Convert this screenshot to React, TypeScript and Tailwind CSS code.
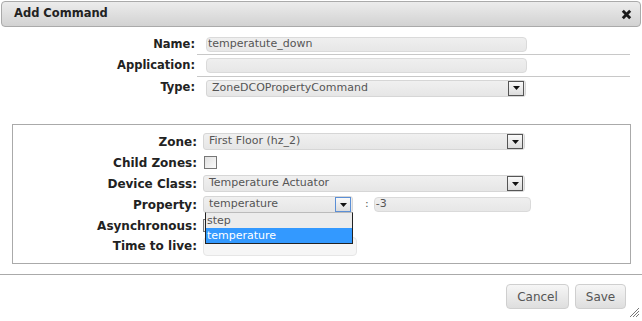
import { useState } from 'react';

const font = { fontFamily: '"DejaVu Sans", Verdana, sans-serif' };

function Arrow({ focused }: { focused?: boolean }) {
  return (
    <span
      className={`flex h-[15px] w-[16px] items-center justify-center border bg-gradient-to-b from-[#fafafa] to-[#dcdcdc] ${
        focused ? 'border-[#5b8fd6]' : 'border-[#555]'
      }`}
    >
      <svg width="7" height="4" viewBox="0 0 7 4">
        <path d="M0 0h7L3.5 4z" fill="#111" />
      </svg>
    </span>
  );
}

function TextBox({ value, w }: { value?: string; w: string }) {
  return (
    <div
      className={`${w} flex h-[15px] items-center rounded-[4px] border border-[#dadada] bg-gradient-to-b from-[#efefef] to-[#e7e7e7] px-[1px] text-[11px] text-[#555]`}
    >
      {value}
    </div>
  );
}

function Select({ value, w, focused }: { value: string; w: string; focused?: boolean }) {
  return (
    <div
      className={`${w} flex h-[17px] items-center justify-between rounded-[3px] border border-[#d6d6d6] bg-gradient-to-b from-[#f0f0f0] to-[#e6e6e6] pl-[5px] pr-[1px] text-[11px] text-[#555]`}
    >
      <span>{value}</span>
      <Arrow focused={focused} />
    </div>
  );
}

function Label({ children, top }: { children: string; top?: boolean }) {
  return (
    <div
      className={`w-[184px] shrink-0 text-right font-bold text-[#222] ${top ? 'text-[11.5px]' : 'text-[12px]'}`}
    >
      {children}
    </div>
  );
}

export default function App() {
  const [open] = useState(true);

  return (
    <div className="relative h-[321px] w-[642px] overflow-hidden bg-white" style={font}>
      {/* Title bar */}
      <div className="mx-[1px] mt-[1px] flex h-[26px] items-center justify-between rounded-[4px] border border-[#aaa] bg-gradient-to-b from-[#ececec] to-[#d2d2d2] pl-[12px] pr-[8px]">
        <span className="text-[11.5px] font-bold text-[#222]">Add Command</span>
        <svg width="11" height="11" viewBox="0 0 11 11">
          <path d="M1.8 1.8l7.4 7.4M9.2 1.8l-7.4 7.4" stroke="#1a1a1a" strokeWidth="2.9" />
        </svg>
      </div>

      {/* Top fields */}
      <div className="mt-[8px] flex flex-col pl-[11px]">
        <div className="flex h-[20px] items-center">
          <Label top>Name:</Label>
          <div className="ml-[2px] flex h-full w-[433px] items-center border-b border-[#c8c8c8] pl-[9px]">
            <TextBox value="temperatute_down" w="w-[321px]" />
          </div>
        </div>
        <div className="flex h-[22px] items-center">
          <Label top>Application:</Label>
          <div className="ml-[2px] flex h-full w-[433px] items-center border-b border-[#c8c8c8] pl-[9px]">
            <TextBox w="w-[321px]" />
          </div>
        </div>
        <div className="flex h-[22px] items-center">
          <Label top>Type:</Label>
          <div className="ml-[2px] flex items-center pl-[9px]">
            <Select value="ZoneDCOPropertyCommand" w="w-[320px]" />
          </div>
        </div>
      </div>

      {/* Zone box */}
      <div className="ml-[12px] mt-[25px] flex h-[140px] w-[619px] flex-col border border-[#aaa] pt-[6px]">
        <div className="flex h-[21px] items-center">
          <Label>Zone:</Label>
          <div className="ml-[6px]">
            <Select value="First Floor (hz_2)" w="w-[322px]" />
          </div>
        </div>
        <div className="flex h-[21px] items-center">
          <Label>Child Zones:</Label>
          <div className="ml-[7px] h-[13px] w-[13px] border border-[#777] bg-gradient-to-br from-[#e0e0e0] to-[#fbfbfb]" />
        </div>
        <div className="flex h-[21px] items-center">
          <Label>Device Class:</Label>
          <div className="ml-[6px]">
            <Select value="Temperature Actuator" w="w-[322px]" />
          </div>
        </div>
        <div className="flex h-[21px] items-center">
          <Label>Property:</Label>
          <div className="relative ml-[6px]">
            <Select value="temperature" w="w-[150px]" focused />
            {open && (
              <div className="absolute left-[2px] top-[16px] z-10 flex w-[148px] flex-col border border-[#222] border-t-[#bbb] bg-white text-[11px]">
                <div className="h-[15px] bg-[#ececec] pl-[1px] leading-[15px] text-[#555]">step</div>
                <div className="h-[15px] bg-[#3399ff] pl-[1px] leading-[15px] text-white">temperature</div>
              </div>
            )}
          </div>
          <span className="ml-[12px] text-[11px] text-[#555]">:</span>
          <div className="ml-[5px]">
            <TextBox value="-3" w="w-[157px]" />
          </div>
        </div>
        <div className="flex h-[21px] items-center">
          <Label>Asynchronous:</Label>
          <div className="ml-[6px] h-[13px] w-[13px] border border-[#777] bg-[#eee]" />
        </div>
        <div className="flex h-[20px] items-center">
          <Label>Time to live:</Label>
          <div className="ml-[6px] h-[19px] w-[154px] rounded-[4px] border border-[#e6e6e6] bg-[#f6f6f6]" />
        </div>
      </div>

      {/* Footer */}
      <div className="mt-[10px] border-t border-[#aaa]" />
      <div className="flex justify-end gap-[6px] pr-[16px] pt-[9px]">
        <button className="h-[25px] w-[63px] rounded-[4px] border border-[#cfcfcf] bg-gradient-to-b from-[#f6f6f6] to-[#dedede] text-[12px] text-[#555]">
          Cancel
        </button>
        <button className="h-[25px] w-[51px] rounded-[4px] border border-[#cfcfcf] bg-gradient-to-b from-[#f6f6f6] to-[#dedede] text-[12px] text-[#555]">
          Save
        </button>
      </div>

      {/* Resize grip */}
      <svg className="absolute bottom-[3px] right-[2px]" width="11" height="11" viewBox="0 0 11 11">
        <path d="M1 10L10 1M4 10L10 4M7 10L10 7" stroke="#777" strokeWidth="1" />
      </svg>
    </div>
  );
}
